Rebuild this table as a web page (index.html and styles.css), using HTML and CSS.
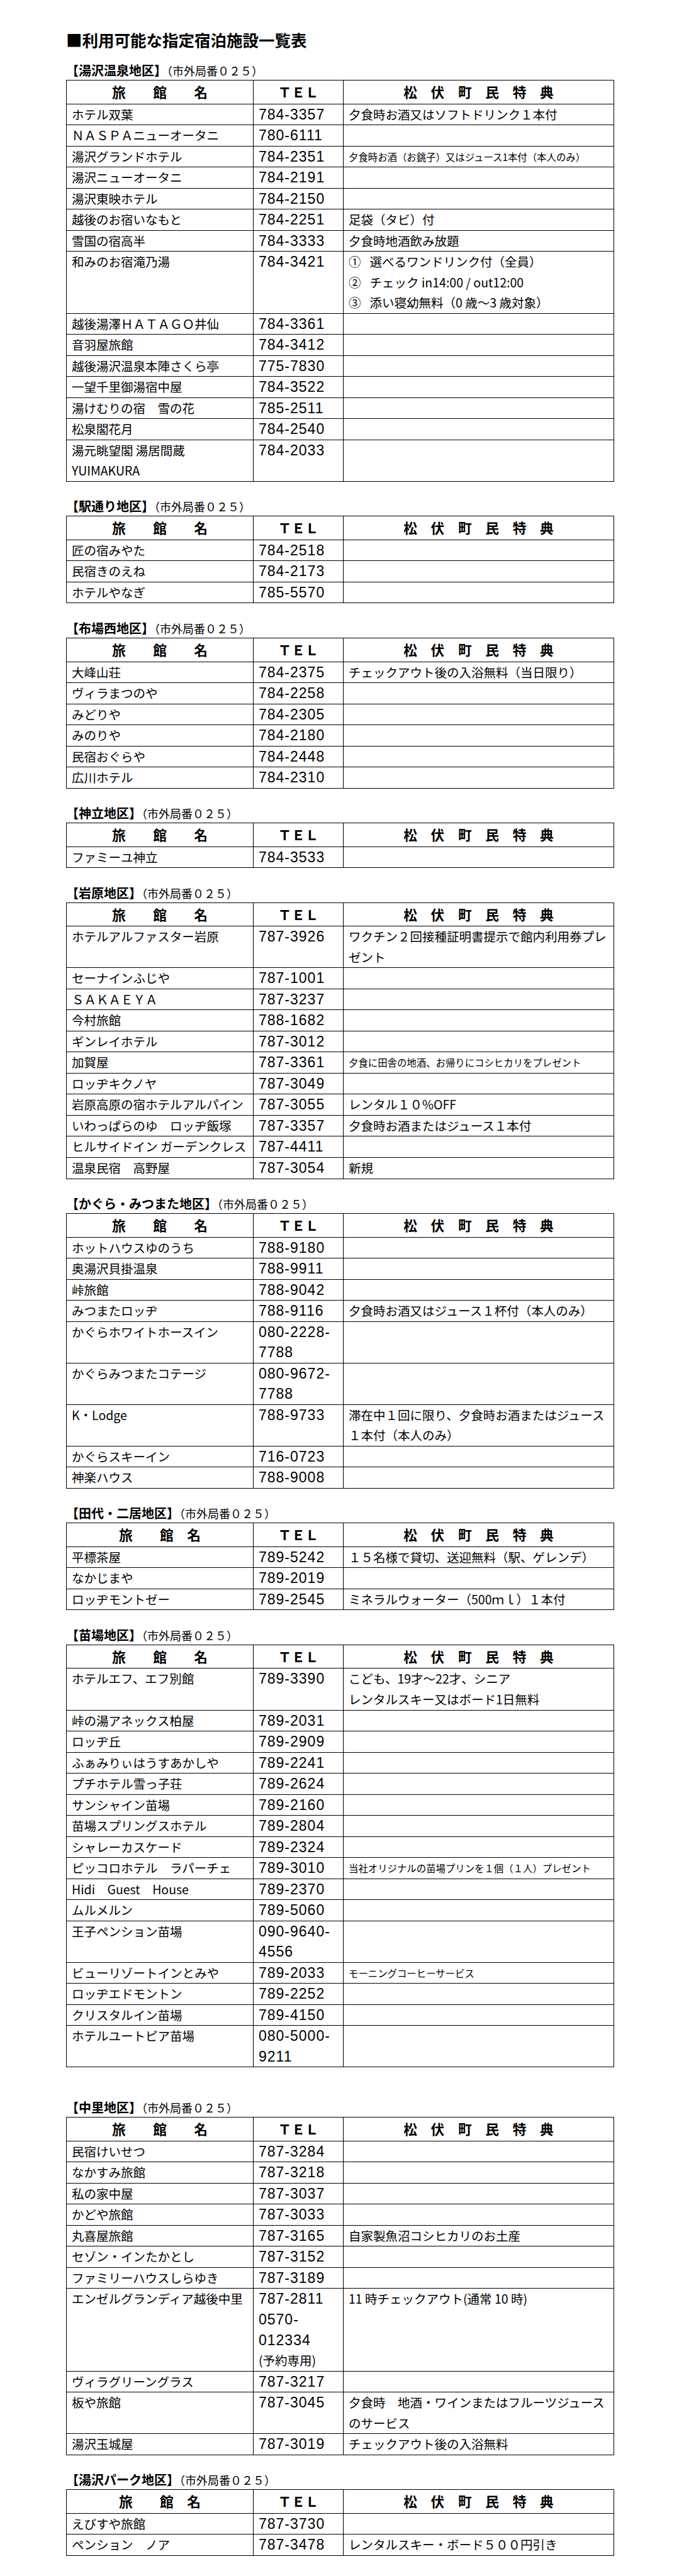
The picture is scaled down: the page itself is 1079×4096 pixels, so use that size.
FILE: index.html
```html
<!DOCTYPE html>
<html lang="ja">
<head>
<meta charset="utf-8">
<title>利用可能な指定宿泊施設一覧表</title>
<link rel="stylesheet" href="styles.css">
</head>
<body>
<div class="page">
  <h1 class="title">■利用可能な指定宿泊施設一覧表</h1>

  <section class="section first">
    <div class="sec-head"><b>【湯沢温泉地区】</b><span>（市外局番０２５）</span></div>
    <table>
      <colgroup><col class="c1"><col class="c2"><col class="c3"></colgroup>
      <tr><th>旅　　館　　名</th><th>ＴＥＬ</th><th>松　伏　町　民　特　典</th></tr>
      <tr><td>ホテル双葉</td><td class="tel">784-3357</td><td>夕食時お酒又はソフトドリンク１本付</td></tr>
      <tr><td>ＮＡＳＰＡニューオータニ</td><td class="tel">780-6111</td><td></td></tr>
      <tr><td>湯沢グランドホテル</td><td class="tel">784-2351</td><td class="sm">夕食時お酒（お銚子）又はジュース1本付（本人のみ）</td></tr>
      <tr><td>湯沢ニューオータニ</td><td class="tel">784-2191</td><td></td></tr>
      <tr><td>湯沢東映ホテル</td><td class="tel">784-2150</td><td></td></tr>
      <tr><td>越後のお宿いなもと</td><td class="tel">784-2251</td><td>足袋（タビ）付</td></tr>
      <tr><td>雪国の宿高半</td><td class="tel">784-3333</td><td>夕食時地酒飲み放題</td></tr>
      <tr><td>和みのお宿滝乃湯</td><td class="tel">784-3421</td><td>①&ensp;&nbsp;選べるワンドリンク付（全員）<br>②&ensp;&nbsp;チェック in14:00 / out12:00<br>③&ensp;&nbsp;添い寝幼無料（0 歳〜3 歳対象）</td></tr>
      <tr><td>越後湯澤ＨＡＴＡＧＯ井仙</td><td class="tel">784-3361</td><td></td></tr>
      <tr><td>音羽屋旅館</td><td class="tel">784-3412</td><td></td></tr>
      <tr><td>越後湯沢温泉本陣さくら亭</td><td class="tel">775-7830</td><td></td></tr>
      <tr><td>一望千里御湯宿中屋</td><td class="tel">784-3522</td><td></td></tr>
      <tr><td>湯けむりの宿　雪の花</td><td class="tel">785-2511</td><td></td></tr>
      <tr><td>松泉閣花月</td><td class="tel">784-2540</td><td></td></tr>
      <tr><td>湯元眺望閣 湯居間蔵<br>YUIMAKURA</td><td class="tel">784-2033</td><td></td></tr>
    </table>
  </section>

  <section class="section">
    <div class="sec-head"><b>【駅通り地区】</b><span>（市外局番０２５）</span></div>
    <table>
      <colgroup><col class="c1"><col class="c2"><col class="c3"></colgroup>
      <tr><th>旅　　館　　名</th><th>ＴＥＬ</th><th>松　伏　町　民　特　典</th></tr>
      <tr><td>匠の宿みやた</td><td class="tel">784-2518</td><td></td></tr>
      <tr><td>民宿きのえね</td><td class="tel">784-2173</td><td></td></tr>
      <tr><td>ホテルやなぎ</td><td class="tel">785-5570</td><td></td></tr>
    </table>
  </section>

  <section class="section">
    <div class="sec-head"><b>【布場西地区】</b><span>（市外局番０２５）</span></div>
    <table>
      <colgroup><col class="c1"><col class="c2"><col class="c3"></colgroup>
      <tr><th>旅　　館　　名</th><th>ＴＥＬ</th><th>松　伏　町　民　特　典</th></tr>
      <tr><td>大峰山荘</td><td class="tel">784-2375</td><td>チェックアウト後の入浴無料（当日限り）</td></tr>
      <tr><td>ヴィラまつのや</td><td class="tel">784-2258</td><td></td></tr>
      <tr><td>みどりや</td><td class="tel">784-2305</td><td></td></tr>
      <tr><td>みのりや</td><td class="tel">784-2180</td><td></td></tr>
      <tr><td>民宿おぐらや</td><td class="tel">784-2448</td><td></td></tr>
      <tr><td>広川ホテル</td><td class="tel">784-2310</td><td></td></tr>
    </table>
  </section>

  <section class="section">
    <div class="sec-head"><b>【神立地区】</b><span>（市外局番０２５）</span></div>
    <table>
      <colgroup><col class="c1"><col class="c2"><col class="c3"></colgroup>
      <tr><th>旅　　館　　名</th><th>ＴＥＬ</th><th>松　伏　町　民　特　典</th></tr>
      <tr><td>ファミーユ神立</td><td class="tel">784-3533</td><td></td></tr>
    </table>
  </section>

  <section class="section">
    <div class="sec-head"><b>【岩原地区】</b><span>（市外局番０２５）</span></div>
    <table>
      <colgroup><col class="c1"><col class="c2"><col class="c3"></colgroup>
      <tr><th>旅　　館　　名</th><th>ＴＥＬ</th><th>松　伏　町　民　特　典</th></tr>
      <tr><td>ホテルアルファスター岩原</td><td class="tel">787-3926</td><td>ワクチン２回接種証明書提示で館内利用券プレ<br>ゼント</td></tr>
      <tr><td>セーナインふじや</td><td class="tel">787-1001</td><td></td></tr>
      <tr><td>ＳＡＫＡＥＹＡ</td><td class="tel">787-3237</td><td></td></tr>
      <tr><td>今村旅館</td><td class="tel">788-1682</td><td></td></tr>
      <tr><td>ギンレイホテル</td><td class="tel">787-3012</td><td></td></tr>
      <tr><td>加賀屋</td><td class="tel">787-3361</td><td class="sm">夕食に田舎の地酒、お帰りにコシヒカリをプレゼント</td></tr>
      <tr><td>ロッヂキクノヤ</td><td class="tel">787-3049</td><td></td></tr>
      <tr><td>岩原高原の宿ホテルアルパイン</td><td class="tel">787-3055</td><td>レンタル１０%OFF</td></tr>
      <tr><td>いわっぱらのゆ　ロッヂ飯塚</td><td class="tel">787-3357</td><td>夕食時お酒またはジュース１本付</td></tr>
      <tr><td>ヒルサイドイン ガーデンクレス</td><td class="tel">787-4411</td><td></td></tr>
      <tr><td>温泉民宿　高野屋</td><td class="tel">787-3054</td><td>新規</td></tr>
    </table>
  </section>

  <section class="section">
    <div class="sec-head"><b>【かぐら・みつまた地区】</b><span>（市外局番０２５）</span></div>
    <table>
      <colgroup><col class="c1"><col class="c2"><col class="c3"></colgroup>
      <tr><th>旅　　館　　名</th><th>ＴＥＬ</th><th>松　伏　町　民　特　典</th></tr>
      <tr><td>ホットハウスゆのうち</td><td class="tel">788-9180</td><td></td></tr>
      <tr><td>奥湯沢貝掛温泉</td><td class="tel">788-9911</td><td></td></tr>
      <tr><td>峠旅館</td><td class="tel">788-9042</td><td></td></tr>
      <tr><td>みつまたロッヂ</td><td class="tel">788-9116</td><td>夕食時お酒又はジュース１杯付（本人のみ）</td></tr>
      <tr><td>かぐらホワイトホースイン</td><td class="tel">080-2228-<br>7788</td><td></td></tr>
      <tr><td>かぐらみつまたコテージ</td><td class="tel">080-9672-<br>7788</td><td></td></tr>
      <tr><td>K・Lodge</td><td class="tel">788-9733</td><td>滞在中１回に限り、夕食時お酒またはジュース<br>１本付（本人のみ）</td></tr>
      <tr><td>かぐらスキーイン</td><td class="tel">716-0723</td><td></td></tr>
      <tr><td>神楽ハウス</td><td class="tel">788-9008</td><td></td></tr>
    </table>
  </section>

  <section class="section">
    <div class="sec-head"><b>【田代・二居地区】</b><span>（市外局番０２５）</span></div>
    <table>
      <colgroup><col class="c1"><col class="c2"><col class="c3"></colgroup>
      <tr><th>旅　　館　名</th><th>ＴＥＬ</th><th>松　伏　町　民　特　典</th></tr>
      <tr><td>平標茶屋</td><td class="tel">789-5242</td><td>１５名様で貸切、送迎無料（駅、ゲレンデ）</td></tr>
      <tr><td>なかじまや</td><td class="tel">789-2019</td><td></td></tr>
      <tr><td>ロッヂモントゼー</td><td class="tel">789-2545</td><td>ミネラルウォーター（500ｍｌ）１本付</td></tr>
    </table>
  </section>

  <section class="section">
    <div class="sec-head"><b>【苗場地区】</b><span>（市外局番０２５）</span></div>
    <table>
      <colgroup><col class="c1"><col class="c2"><col class="c3"></colgroup>
      <tr><th>旅　　館　　名</th><th>ＴＥＬ</th><th>松　伏　町　民　特　典</th></tr>
      <tr><td>ホテルエフ、エフ別館</td><td class="tel">789-3390</td><td>こども、19才〜22才、シニア<br>レンタルスキー又はボード1日無料</td></tr>
      <tr><td>峠の湯アネックス柏屋</td><td class="tel">789-2031</td><td></td></tr>
      <tr><td>ロッヂ丘</td><td class="tel">789-2909</td><td></td></tr>
      <tr><td>ふぁみりぃはうすあかしや</td><td class="tel">789-2241</td><td></td></tr>
      <tr><td>プチホテル雪っ子荘</td><td class="tel">789-2624</td><td></td></tr>
      <tr><td>サンシャイン苗場</td><td class="tel">789-2160</td><td></td></tr>
      <tr><td>苗場スプリングスホテル</td><td class="tel">789-2804</td><td></td></tr>
      <tr><td>シャレーカスケード</td><td class="tel">789-2324</td><td></td></tr>
      <tr><td>ピッコロホテル　ラパーチェ</td><td class="tel">789-3010</td><td class="sm">当社オリジナルの苗場プリンを１個（１人）プレゼント</td></tr>
      <tr><td>Hidi　Guest　House</td><td class="tel">789-2370</td><td></td></tr>
      <tr><td>ムルメルン</td><td class="tel">789-5060</td><td></td></tr>
      <tr><td>王子ペンション苗場</td><td class="tel">090-9640-<br>4556</td><td></td></tr>
      <tr><td>ビューリゾートインとみや</td><td class="tel">789-2033</td><td class="sm">モーニングコーヒーサービス</td></tr>
      <tr><td>ロッヂエドモントン</td><td class="tel">789-2252</td><td></td></tr>
      <tr><td>クリスタルイン苗場</td><td class="tel">789-4150</td><td></td></tr>
      <tr><td>ホテルユートピア苗場</td><td class="tel">080-5000-<br>9211</td><td></td></tr>
    </table>
  </section>

  <section class="section wide">
    <div class="sec-head"><b>【中里地区】</b><span>（市外局番０２５）</span></div>
    <table>
      <colgroup><col class="c1"><col class="c2"><col class="c3"></colgroup>
      <tr><th>旅　　館　　名</th><th>ＴＥＬ</th><th>松　伏　町　民　特　典</th></tr>
      <tr><td>民宿けいせつ</td><td class="tel">787-3284</td><td></td></tr>
      <tr><td>なかすみ旅館</td><td class="tel">787-3218</td><td></td></tr>
      <tr><td>私の家中屋</td><td class="tel">787-3037</td><td></td></tr>
      <tr><td>かどや旅館</td><td class="tel">787-3033</td><td></td></tr>
      <tr><td>丸喜屋旅館</td><td class="tel">787-3165</td><td>自家製魚沼コシヒカリのお土産</td></tr>
      <tr><td>セゾン・インたかとし</td><td class="tel">787-3152</td><td></td></tr>
      <tr><td>ファミリーハウスしらゆき</td><td class="tel">787-3189</td><td></td></tr>
      <tr><td>エンゼルグランディア越後中里</td><td class="tel">787-2811<br>0570-<br>012334<br><span class="yoyaku">(予約専用)</span></td><td>11 時チェックアウト(通常 10 時)</td></tr>
      <tr><td>ヴィラグリーングラス</td><td class="tel">787-3217</td><td></td></tr>
      <tr><td>板や旅館</td><td class="tel">787-3045</td><td>夕食時　地酒・ワインまたはフルーツジュース<br>のサービス</td></tr>
      <tr><td>湯沢玉城屋</td><td class="tel">787-3019</td><td>チェックアウト後の入浴無料</td></tr>
    </table>
  </section>

  <section class="section">
    <div class="sec-head"><b>【湯沢パーク地区】</b><span>（市外局番０２５）</span></div>
    <table>
      <colgroup><col class="c1"><col class="c2"><col class="c3"></colgroup>
      <tr><th>旅　　館　名</th><th>ＴＥＬ</th><th>松　伏　町　民　特　典</th></tr>
      <tr><td>えびすや旅館</td><td class="tel">787-3730</td><td></td></tr>
      <tr><td>ペンション　ノア</td><td class="tel">787-3478</td><td>レンタルスキー・ボード５００円引き</td></tr>
    </table>
  </section>
</div>
</body>
</html>
```

FILE: styles.css
```css
* {
  box-sizing: border-box;
}

html,
body {
  margin: 0;
  padding: 0;
  background: #ffffff;
}

body {
  font-family: "Noto Sans CJK JP", "Liberation Sans", sans-serif;
  color: #000000;
}

.page {
  width: 870px;
  margin-left: 105px;
  padding-top: 44.5px;
  padding-bottom: 36px;
}

.title {
  margin: 0;
  font-size: 25.5px;
  line-height: 36px;
  font-weight: 700;
  letter-spacing: 0;
}

.section {
  margin-top: 25.4px;
}

.section.first {
  margin-top: 17.4px;
}

.section.wide {
  margin-top: 49.9px;
}

.sec-head {
  line-height: 27px;
  height: 27px;
  margin-bottom: 1.9px;
  white-space: nowrap;
}

.sec-head b {
  font-size: 20px;
  font-weight: 700;
}

.sec-head span {
  font-size: 18px;
  font-weight: 400;
}

table {
  width: 870px;
  border-collapse: collapse;
  table-layout: fixed;
}

.c1 {
  width: 297px;
}

.c2 {
  width: 143px;
}

.c3 {
  width: 430px;
}

th,
td {
  border: 1px solid #000000;
  vertical-align: top;
  text-align: left;
  white-space: nowrap;
  overflow: hidden;
}

th {
  padding: 0;
  height: 37.8px;
  line-height: 36.8px;
  font-size: 21.7px;
  font-weight: 700;
  text-align: center;
}

td {
  padding: 0 2px 0 8px;
  line-height: 32.52px;
  font-size: 19.5px;
  font-weight: 400;
}

td.tel {
  font-family: "Liberation Sans", "Noto Sans CJK JP", sans-serif;
  font-size: 23px;
  letter-spacing: 1px;
}

td.tel .yoyaku {
  font-family: "Noto Sans CJK JP", sans-serif;
  font-size: 19.5px;
  letter-spacing: 0;
}

td.sm {
  font-size: 15.4px;
}
```
